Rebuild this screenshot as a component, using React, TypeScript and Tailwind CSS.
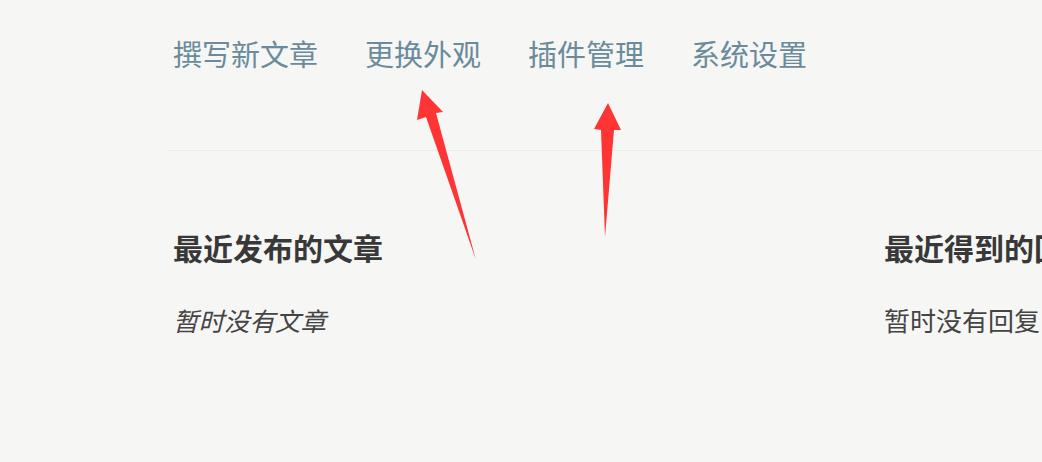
const navItems = ["撰写新文章", "更换外观", "插件管理", "系统设置"];

const cjk = "font-['Microsoft_YaHei','Noto_Sans_CJK_SC',sans-serif]";

function Arrows() {
  return (
    <svg
      className="pointer-events-none absolute left-0 top-0"
      width="1042"
      height="462"
      viewBox="0 0 1042 462"
    >
      <polygon points="422,90 443,112 436,113 476,260 426,117 417,120" fill="#ff3535" />
      <polygon points="608,103 621,130 614,130 605,237 601,130 594,129" fill="#ff3535" />
    </svg>
  );
}

export default function App() {
  return (
    <div className={`relative h-[462px] w-[1042px] overflow-hidden bg-[#f6f6f4] ${cjk}`}>
      <div className="pl-[167px] pt-[33px]">
        <nav className="flex gap-[47px] pl-[6px]">
          {navItems.map((item) => (
            <a key={item} className="text-[29px] leading-[40px] text-[#6a8b9c] whitespace-nowrap">
              {item}
            </a>
          ))}
        </nav>
        <div className="mt-[77px] h-px bg-[#ebebe8]" />
        <div className="mt-[76px] flex pl-[6px]">
          <section className="w-[711px] shrink-0">
            <h3 className="text-[30px] font-bold leading-[40px] text-[#383838] whitespace-nowrap">
              最近发布的文章
            </h3>
            <p className="mt-[36px] text-[25.5px] italic leading-[34px] text-[#444444]">暂时没有文章</p>
          </section>
          <section className="w-[150px] shrink-0">
            <h3 className="text-[30px] font-bold leading-[40px] text-[#383838] whitespace-nowrap">
              最近得到的回复
            </h3>
            <p className="mt-[36px] text-[26px] leading-[34px] text-[#444444] whitespace-nowrap">
              暂时没有回复
            </p>
          </section>
        </div>
      </div>
      <Arrows />
    </div>
  );
}
